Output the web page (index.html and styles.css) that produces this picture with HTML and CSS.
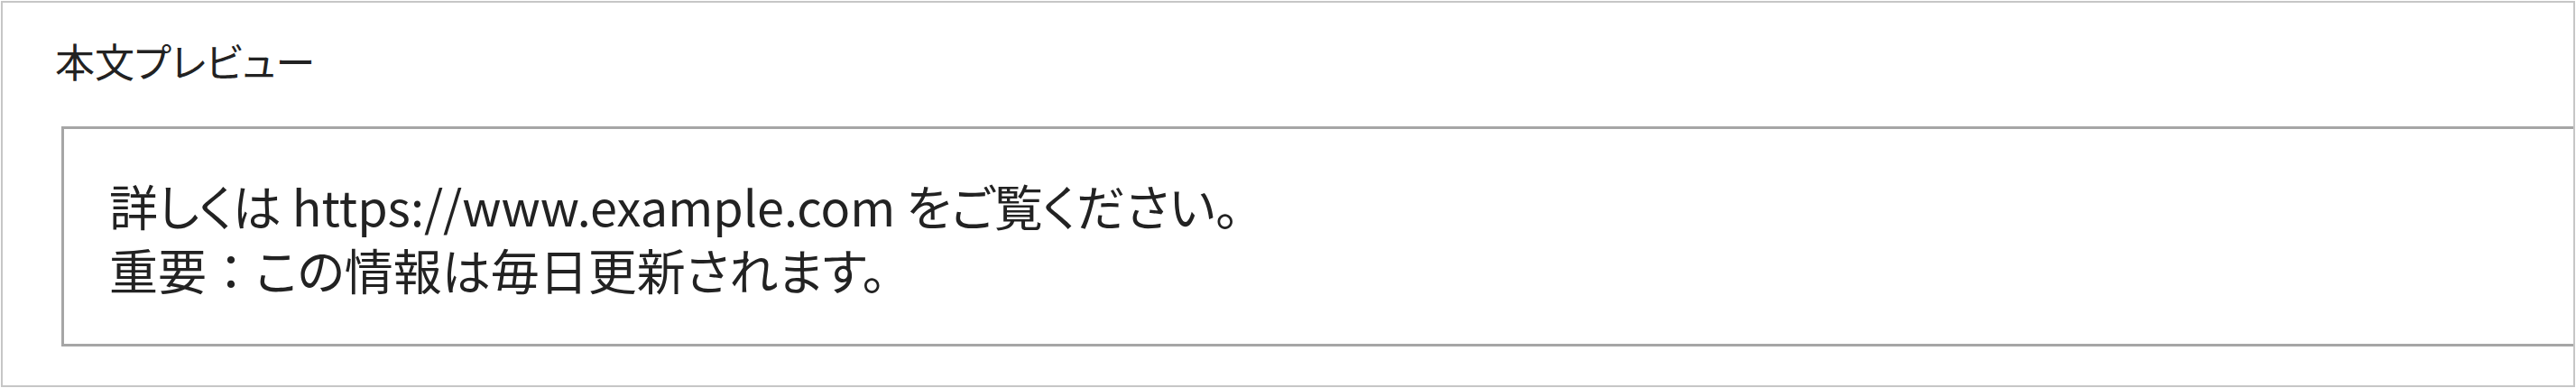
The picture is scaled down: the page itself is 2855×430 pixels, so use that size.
FILE: index.html
```html
<!DOCTYPE html>
<html lang="ja">

<head>
    <meta charset="UTF-8">
    <meta name="viewport" content="width=device-width, initial-scale=1.0">
    <title>本文プレビュー</title>
    <link rel="stylesheet" href="styles.css">
</head>

<body>
    <div class="preview-panel">
        <div class="preview-label">本文プレビュー</div>
        <div class="preview-body">
            <p>詳しくは https://www.example.com をご覧ください。</p>
            <p>重要<span class="full-width">：</span>この情報は毎日更新されます。</p>
        </div>
    </div>
</body>

</html>
```

FILE: styles.css
```css
body {
    font-family: "Noto Sans CJK JP", "Noto Sans", sans-serif;
    background-color: #fff;
    margin: 0;
    color: #222;
}

.preview-panel {
    margin: 1px;
    height: 428px;
    box-sizing: border-box;
    border: 2px solid #c6c6c6;
    padding: 32px 0 0 56px;
    overflow: hidden;
    /* the body box runs past the right edge and gets cut off here */
}

.preview-label {
    font-size: 44px;
    font-feature-settings: "palt";
    padding-left: 2px;
}

.preview-body {
    margin: 41px -40px 0 9px;
    border: 3px solid #a6a6a6;
    padding: 49px 50px 47px;
    font-size: 54px;
    line-height: 71px;
    /* proportional kana, like the UI font */
    font-feature-settings: "palt";
}

.preview-body p {
    margin: 0;
}

/* keep the colon on a full cell */
.full-width {
    font-feature-settings: normal;
}
```
